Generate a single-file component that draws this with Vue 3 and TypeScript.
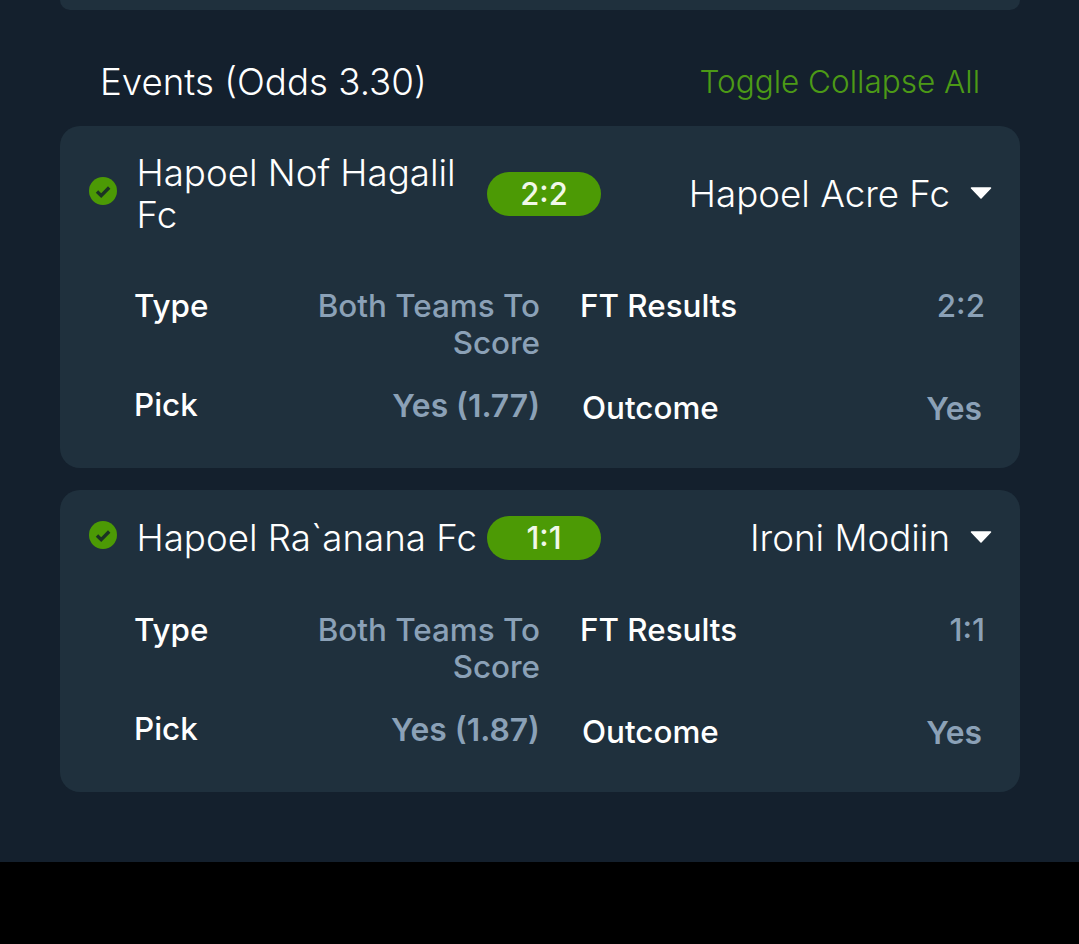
<template>
  <div class="page">
    <div class="screen">
      <div class="top-card"></div>

      <div class="events-head">
        <span class="events-title">Events (Odds {{ odds }})</span>
        <span class="toggle">Toggle Collapse All</span>
      </div>

      <div v-for="ev in events" :key="ev.home" class="event-card">
        <div class="match-row">
          <svg class="check" viewBox="0 0 28 28">
            <circle cx="14" cy="14" r="14" fill="#4c9a05" />
            <path d="M8 14.5l4.2 4.2 8-8.2" fill="none" stroke="#1b3324" stroke-width="3.4" />
          </svg>
          <div class="home">{{ ev.home }}</div>
          <div class="score">{{ ev.score }}</div>
          <div class="away">{{ ev.away }}</div>
          <svg class="caret" viewBox="0 0 22 12">
            <path d="M1.5 1h19L11 11z" fill="#fff" stroke="#fff" stroke-width="1.5" stroke-linejoin="round" />
          </svg>
        </div>

        <div class="details">
          <div class="col">
            <div class="line line-type">
              <span class="key">Type</span>
              <span class="val">{{ ev.type }}</span>
            </div>
            <div class="line">
              <span class="key">Pick</span>
              <span class="val strong">{{ ev.pick }}</span>
            </div>
          </div>
          <div class="col col-right">
            <div class="line line-type">
              <span class="key">FT Results</span>
              <span class="val">{{ ev.score }}</span>
            </div>
            <div class="line line-outcome">
              <span class="key">Outcome</span>
              <span class="val strong">{{ ev.outcome }}</span>
            </div>
          </div>
        </div>
      </div>
    </div>
    <div class="bottom-bar"></div>
  </div>
</template>

<script setup lang="ts">
const odds = '3.30'

const events = [
  {
    home: 'Hapoel Nof Hagalil Fc',
    away: 'Hapoel Acre Fc',
    score: '2:2',
    type: 'Both Teams To Score',
    pick: 'Yes (1.77)',
    outcome: 'Yes',
  },
  {
    home: 'Hapoel Ra`anana Fc',
    away: 'Ironi Modiin',
    score: '1:1',
    type: 'Both Teams To Score',
    pick: 'Yes (1.87)',
    outcome: 'Yes',
  },
]
</script>

<style>
html,
body {
  margin: 0;
  background: #000;
}
</style>

<style scoped>
.page {
  width: 1079px;
  height: 944px;
  overflow: hidden;
  background: #000;
  font-family: Inter, "Liberation Sans", sans-serif;
}
.screen {
  height: 862px;
  box-sizing: border-box;
  padding: 0 59px 0 60px;
  background: #14202d;
}
.top-card {
  height: 10px;
  background: #1f303d;
  border-radius: 0 0 20px 20px;
}
.events-head {
  display: flex;
  justify-content: space-between;
  align-items: center;
  height: 116px;
  box-sizing: border-box;
  padding: 40px 40px 14px 40px;
}
.events-title {
  font-size: 36.7px;
  font-weight: 300;
  color: #fff;
}
.toggle {
  font-size: 31.5px;
  font-weight: 300;
  color: #4c9a16;
}
.event-card {
  background: #1f303d;
  border-radius: 20px;
  padding: 26px 28px 0 29px;
  margin-bottom: 22px;
}
.match-row {
  display: flex;
  align-items: center;
  color: #fff;
  font-size: 36.7px;
  font-weight: 300;
  line-height: 42px;
}
.check {
  width: 28px;
  height: 28px;
  flex: none;
  margin-right: 19.5px;
  margin-bottom: 6px;
}
.home {
  width: 350.5px;
  flex: none;
}
.score {
  width: 114px;
  height: 44px;
  flex: none;
  border-radius: 22px;
  background: #4c9a05;
  text-align: center;
  font-size: 31px;
  font-weight: 500;
  line-height: 44px;
  color: #f1f8e8;
}
.away {
  flex: 1;
  text-align: right;
}
.caret {
  width: 22px;
  height: 12px;
  flex: none;
  margin-left: 20px;
  margin-bottom: 2px;
}
.details {
  display: flex;
  gap: 40px;
  padding: 52px 7px 41.5px 45px;
}
.col {
  width: 406px;
  flex: none;
}
.col-right {
  width: 405px;
}
.line {
  display: flex;
  justify-content: space-between;
  font-size: 31.4px;
  line-height: 37px;
}
.line-type {
  min-height: 74px;
  margin-bottom: 25px;
}
.line-outcome {
  padding: 2.5px 3px 0 2px;
}
.key {
  flex: none;
  font-weight: 500;
  color: #fff;
}
.val {
  width: 240px;
  text-align: right;
  font-weight: 500;
  color: #8ba1b7;
}
.val.strong {
  font-size: 31.8px;
  font-weight: 600;
}
.bottom-bar {
  height: 82px;
  background: #000;
}
</style>
